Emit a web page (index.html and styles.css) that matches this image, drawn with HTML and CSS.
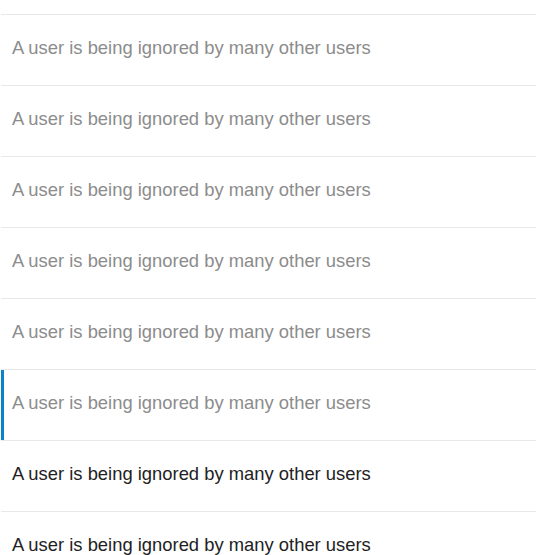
FILE: index.html
```html
<!DOCTYPE html>
<html>
<head>
<meta charset="utf-8">
<link rel="stylesheet" href="styles.css">
</head>
<body>
<ul class="list">
  <li class="item muted">A user is being ignored by many other users</li>
  <li class="item muted">A user is being ignored by many other users</li>
  <li class="item muted">A user is being ignored by many other users</li>
  <li class="item muted">A user is being ignored by many other users</li>
  <li class="item muted">A user is being ignored by many other users</li>
  <li class="item muted active">A user is being ignored by many other users</li>
  <li class="item">A user is being ignored by many other users</li>
  <li class="item">A user is being ignored by many other users</li>
</ul>
</body>
</html>
```
FILE: styles.css
```css
html, body {
  margin: 0;
  padding: 0;
  background: #fff;
}
body {
  font-family: "Liberation Sans", Arial, sans-serif;
  font-size: 18.4px;
  color: #222;
}
.list {
  list-style: none;
  margin: 0 0 0 1px;
  padding: 14px 0 0;
}
.item {
  box-sizing: border-box;
  border-top: 1px solid #e8e8e8;
  height: 71px;
  display: flex;
  align-items: center;
  padding: 0 0 5px 11px;
}
.muted {
  color: #8c8c8c;
}
.active {
  box-shadow: inset 3px 0 0 #0a82c8;
}
```
